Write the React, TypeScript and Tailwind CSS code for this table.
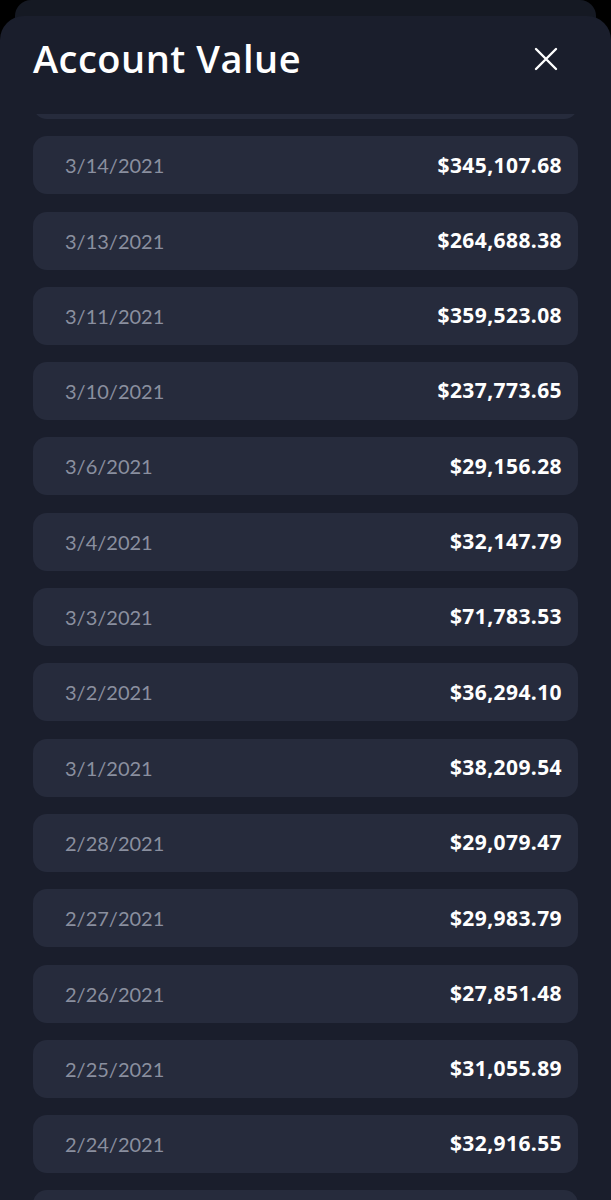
import { useState } from 'react'

interface Entry {
  date: string
  value: string
}

const entries: Entry[] = [
  { date: '3/14/2021', value: '$345,107.68' },
  { date: '3/13/2021', value: '$264,688.38' },
  { date: '3/11/2021', value: '$359,523.08' },
  { date: '3/10/2021', value: '$237,773.65' },
  { date: '3/6/2021', value: '$29,156.28' },
  { date: '3/4/2021', value: '$32,147.79' },
  { date: '3/3/2021', value: '$71,783.53' },
  { date: '3/2/2021', value: '$36,294.10' },
  { date: '3/1/2021', value: '$38,209.54' },
  { date: '2/28/2021', value: '$29,079.47' },
  { date: '2/27/2021', value: '$29,983.79' },
  { date: '2/26/2021', value: '$27,851.48' },
  { date: '2/25/2021', value: '$31,055.89' },
  { date: '2/24/2021', value: '$32,916.55' },
]

function CloseIcon() {
  return (
    <svg width="24" height="24" viewBox="0 0 24 24" fill="none">
      <path d="M2 2L22 22M22 2L2 22" stroke="#ffffff" strokeWidth="2.4" strokeLinecap="round" />
    </svg>
  )
}

function ValueRow({ entry }: { entry: Entry }) {
  return (
    <div className="flex h-[58px] shrink-0 items-center justify-between rounded-[14px] bg-[#262b3c] pl-[32px] pr-[16px]">
      <span className="text-[20px] text-[#8a8f9f]">{entry.date}</span>
      <span className="font-['Open_Sans',sans-serif] text-[21px] font-bold tracking-[0.4px] text-white">{entry.value}</span>
    </div>
  )
}

// rows scrolled partly out of view at the top and bottom edges
function PartialRow() {
  return <div className="h-[58px] shrink-0 rounded-[14px] bg-[#262b3c]" />
}

export default function App() {
  const [open, setOpen] = useState(true)

  return (
    <div className="h-[1200px] overflow-hidden bg-black" style={{ fontFamily: 'Lato, "Noto Sans", sans-serif' }}>
      <div className="mx-[15px] h-[40px] rounded-t-[16px] bg-[#151923]" />
      <div className="relative -mt-[24px] h-[1184px] overflow-hidden rounded-t-[24px] bg-[#1a1e2c]">
        <div className="flex items-center justify-between px-[33px] pt-[20px]">
          <h2 className="font-['Open_Sans',sans-serif] text-[38px] leading-[44px] font-semibold tracking-[0.5px] text-white">
            Account Value
          </h2>
          <button onClick={() => setOpen(!open)} className="mr-[20px] mt-[2px]">
            <CloseIcon />
          </button>
        </div>
        <div className="mt-[34px] h-[1200px] overflow-hidden">
          <div className="-mt-[53px] flex flex-col gap-[17.3px] px-[33px]">
            <PartialRow />
            {entries.map((e) => (
              <ValueRow key={e.date} entry={e} />
            ))}
            <PartialRow />
          </div>
        </div>
      </div>
    </div>
  )
}
